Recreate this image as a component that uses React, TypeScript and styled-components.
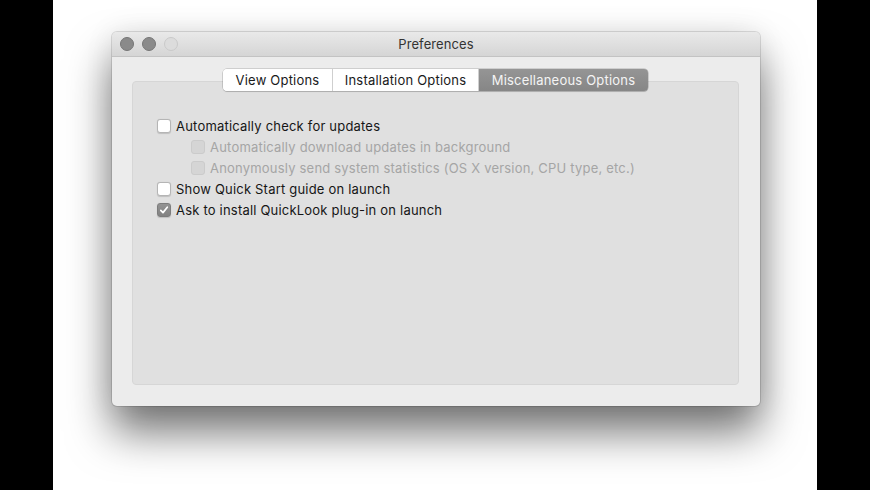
import React from "react";
import styled, { createGlobalStyle } from "styled-components";

const GlobalStyle = createGlobalStyle`
  html, body {
    margin: 0;
    padding: 0;
    background: #000;
  }
  body {
    font-family: Inter, "Liberation Sans", sans-serif;
    -webkit-font-smoothing: antialiased;
  }
`;

const Screen = styled.div`
  display: flex;
  width: 870px;
  height: 490px;
  overflow: hidden;
`;

const Bar = styled.div`
  width: 53px;
  flex-shrink: 0;
  background: #000;
`;

const Stage = styled.div`
  flex: 1;
  background: #fff;
  padding: 32px 0 0 59px;
`;

const Window = styled.div`
  width: 648px;
  height: 374px;
  display: flex;
  flex-direction: column;
  background: #ececec;
  border-radius: 5px;
  box-shadow: 0 0 0 1px rgba(0, 0, 0, 0.12), 0 26px 44px rgba(0, 0, 0, 0.55),
    0 0 30px rgba(0, 0, 0, 0.08);
  overflow: hidden;
`;

const TitleBar = styled.div`
  height: 24px;
  display: grid;
  grid-template-columns: 80px 1fr 80px;
  align-items: center;
  background: linear-gradient(#e9e9e9, #d5d5d5);
  border-bottom: 1px solid #c3c3c3;
`;

const Lights = styled.div`
  display: flex;
  gap: 8px;
  padding-left: 8px;
`;

const Light = styled.span<{ off?: boolean }>`
  width: 12px;
  height: 12px;
  border-radius: 50%;
  background: ${p => (p.off ? "#dcdcdc" : "#8a8a8a")};
  border: 1px solid ${p => (p.off ? "#c9c9c9" : "#767676")};
`;

const Title = styled.div`
  text-align: center;
  font-size: 13px;
  letter-spacing: 0.1px;
  color: #333;
`;

const Body = styled.div`
  flex: 1;
  display: flex;
  flex-direction: column;
  padding: 12px 21px 21px 20px;
`;

const Tabs = styled.div`
  display: flex;
  align-self: center;
  position: relative;
  z-index: 1;
  border-radius: 4px;
  box-shadow: 0 0 0 0.5px rgba(0, 0, 0, 0.25), 0 1px 1px rgba(0, 0, 0, 0.12);
  overflow: hidden;
`;

const Tab = styled.div<{ active?: boolean; w: number }>`
  height: 22px;
  display: flex;
  align-items: center;
  justify-content: center;
  width: ${p => p.w}px;
  font-size: 13px;
  letter-spacing: 0.2px;
  color: ${p => (p.active ? "#f4f4f4" : "#1a1a1a")};
  background: ${p => (p.active ? "linear-gradient(#959595, #868686)" : "#fff")};
  & + & {
    border-left: 1px solid #cfcfcf;
  }
`;

const GroupBox = styled.div`
  flex: 1;
  margin-top: -10px;
  background: #e0e0e0;
  border: 1px solid #d6d6d6;
  border-radius: 4px;
  padding: 33px 0 0 24px;
  display: flex;
  flex-direction: column;
`;

const Row = styled.label<{ indent?: boolean; disabled?: boolean }>`
  display: flex;
  align-items: center;
  gap: 5px;
  height: 21px;
  padding-left: ${p => (p.indent ? 34 : 0)}px;
  font-size: 13px;
  letter-spacing: 0.2px;
  color: ${p => (p.disabled ? "#a5a5a5" : "#161616")};
`;

const Box = styled.span<{ checked?: boolean; disabled?: boolean }>`
  width: 14px;
  height: 14px;
  box-sizing: border-box;
  border-radius: 3px;
  flex-shrink: 0;
  display: flex;
  align-items: center;
  justify-content: center;
  background: ${p =>
    p.checked ? "linear-gradient(#939393, #828282)" : p.disabled ? "#d5d5d5" : "#fff"};
  border: 1px solid ${p => (p.checked ? "#7c7c7c" : p.disabled ? "#cbcbcb" : "#b5b5b5")};
  box-shadow: ${p => (p.disabled ? "none" : "0 0.5px 1px rgba(0,0,0,0.15)")};
`;

const Check = () => (
  <svg width="10" height="10" viewBox="0 0 10 10">
    <path d="M1.8 5.3 L4 7.6 L8.3 2.2" fill="none" stroke="#fff" strokeWidth="1.7" strokeLinecap="round" strokeLinejoin="round" />
  </svg>
);

type Item = { label: string; indent?: boolean; disabled?: boolean; checked?: boolean };

const items: Item[] = [
  { label: "Automatically check for updates" },
  { label: "Automatically download updates in background", indent: true, disabled: true },
  { label: "Anonymously send system statistics (OS X version, CPU type, etc.)", indent: true, disabled: true },
  { label: "Show Quick Start guide on launch" },
  { label: "Ask to install QuickLook plug-in on launch", checked: true },
];

const tabs = [
  { label: "View Options", w: 109 },
  { label: "Installation Options", w: 145 },
  { label: "Miscellaneous Options", w: 169, active: true },
];

const App: React.FC = () => {
  return (
    <>
      <GlobalStyle />
      <Screen>
        <Bar />
        <Stage>
          <Window>
            <TitleBar>
              <Lights>
                <Light />
                <Light />
                <Light off />
              </Lights>
              <Title>Preferences</Title>
              <div />
            </TitleBar>
            <Body>
              <Tabs>
                {tabs.map(t => (
                  <Tab key={t.label} w={t.w} active={t.active}>
                    {t.label}
                  </Tab>
                ))}
              </Tabs>
              <GroupBox>
                {items.map(it => (
                  <Row key={it.label} indent={it.indent} disabled={it.disabled}>
                    <Box checked={it.checked} disabled={it.disabled}>
                      {it.checked && <Check />}
                    </Box>
                    {it.label}
                  </Row>
                ))}
              </GroupBox>
            </Body>
          </Window>
        </Stage>
        <Bar />
      </Screen>
    </>
  );
};

export default App;
